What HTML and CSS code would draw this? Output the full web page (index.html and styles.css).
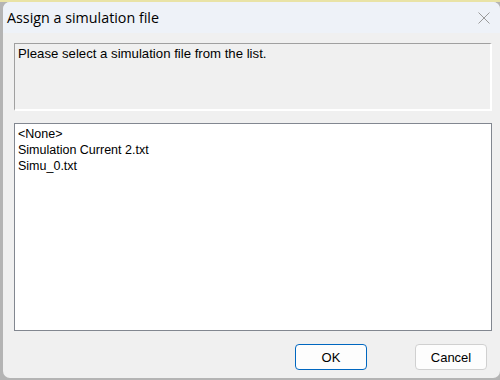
FILE: index.html
```html
<!DOCTYPE html>
<html>
<head>
<meta charset="utf-8">
<link rel="stylesheet" href="styles.css">
</head>
<body>
<div class="window">
  <div class="titlebar">
    <span class="title">Assign a simulation file</span>
    <svg class="close" width="12" height="12" viewBox="0 0 12 12"><path d="M0.5 0.5 L11.5 11.5 M11.5 0.5 L0.5 11.5" stroke="#9a9a9a" stroke-width="1" fill="none"/></svg>
  </div>
  <div class="content">
    <div class="message">Please select a simulation file from the list.</div>
    <div class="listbox">
      <div class="item">&lt;None&gt;</div>
      <div class="item">Simulation Current 2.txt</div>
      <div class="item">Simu_0.txt</div>
    </div>
    <div class="buttons">
      <button class="btn btn-default">OK</button>
      <button class="btn">Cancel</button>
    </div>
  </div>
</div>
</body>
</html>
```

FILE: styles.css
```css
html, body {
  margin: 0;
  padding: 0;
}
body {
  width: 500px;
  height: 380px;
  overflow: hidden;
  background: linear-gradient(to bottom, #e9e3a6 0, #e9e3a6 2px, #b4b4b4 2px, #b4b4b4 100%);
  padding-top: 2px;
  padding-left: 3px;
  box-sizing: border-box;
}
.window {
  width: 497px;
  height: 376px;
  background: #f0f0f0;
  border-radius: 7px;
  overflow: hidden;
  display: flex;
  flex-direction: column;
}
.titlebar {
  height: 31px;
  background: #eef2f8;
  display: flex;
  align-items: center;
  justify-content: space-between;
  padding: 0 10px 0 4px;
  flex: none;
}
.title {
  font-family: "Open Sans", "Noto Sans", sans-serif;
  font-size: 14.3px;
  color: #000;
  padding-bottom: 1px;
}
.close {
  display: block;
  margin-top: 1px;
}
.content {
  flex: 1;
  display: flex;
  flex-direction: column;
  padding: 10px 8px 0 11px;
  font-family: "Liberation Sans", Arial, sans-serif;
  font-size: 12.5px;
  color: #000;
}
.message {
  height: 59px;
  border-top: 1px solid #a0a0a0;
  border-left: 1px solid #a0a0a0;
  border-bottom: 2px solid #fff;
  border-right: 2px solid #fff;
  padding: 3px 3px;
  line-height: 14px;
  font-size: 13.2px;
}
.listbox {
  margin-top: 12px;
  height: 208px;
  background: #fff;
  border: 1px solid #828790;
  padding: 2px 3px;
  box-sizing: border-box;
}
.item {
  line-height: 16px;
  height: 16px;
}
.buttons {
  display: flex;
  justify-content: flex-end;
  gap: 48px;
  margin-top: 13px;
  padding-right: 5px;
}
.btn {
  width: 72px;
  height: 26px;
  background: #fdfdfd;
  border: 1px solid #d0d0d0;
  border-radius: 4px;
  font-family: "Liberation Sans", Arial, sans-serif;
  font-size: 13px;
  color: #000;
  padding: 0;
}
.btn-default {
  border-color: #0067c0;
}
```
